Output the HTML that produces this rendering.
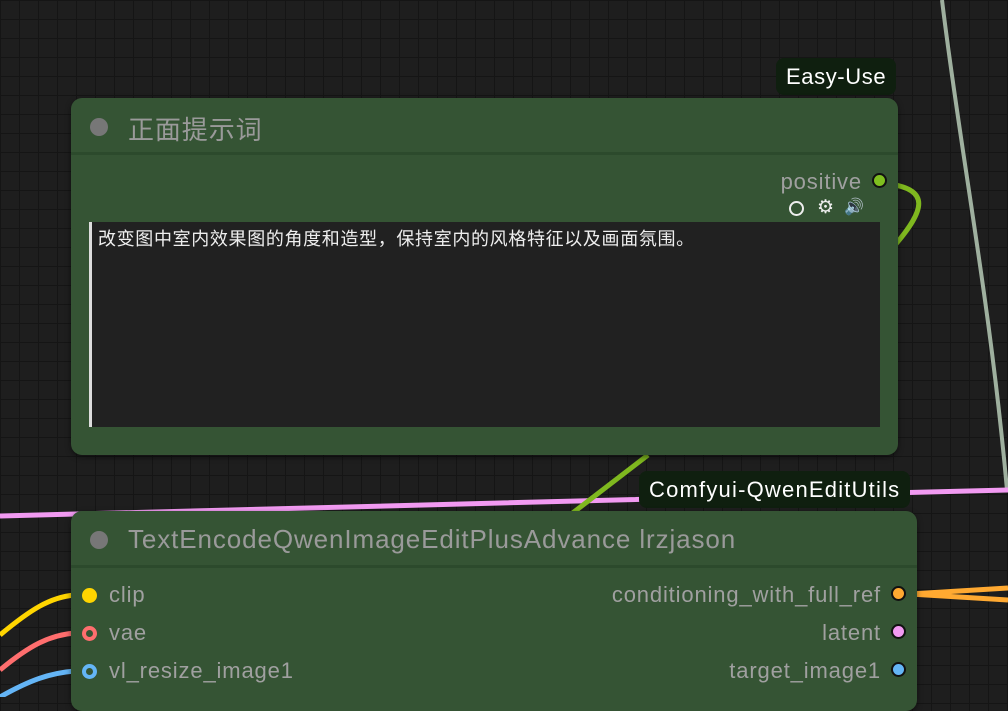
<!DOCTYPE html><html><head><meta charset="utf-8"><style>
body{margin:0;width:1008px;height:697px;overflow:hidden;position:relative;background-color:#1e1e1e;
background-image:linear-gradient(#151515 1px,transparent 1px),linear-gradient(90deg,#151515 1px,transparent 1px);background-size:19px 19px;font-family:"Liberation Sans","Noto Sans CJK SC",sans-serif}
.node{position:absolute;background:#355434;border-radius:11px;box-shadow:0 2px 6px rgba(0,0,0,.5)}
.hdr{position:absolute;left:0;right:0;top:0;border-bottom:3px solid #2c4a2c}
.t{position:absolute;color:#9a9a9a;font-size:26px;letter-spacing:0.9px;white-space:nowrap}
.dot{position:absolute;width:18px;height:18px;border-radius:50%;background:#777}
.badge{position:absolute;background:#0f1f0f;color:#fff;font-size:22px;letter-spacing:1.2px;border-radius:8px;padding:0 10px;height:37px;line-height:37px;white-space:nowrap}
.lbl{position:absolute;color:#a0a0a0;font-size:22px;letter-spacing:0.85px;white-space:nowrap}
.s{position:absolute;width:11px;height:11px;border-radius:50%;border:2px solid #111}
</style></head><body>
<svg width="1008" height="697" style="position:absolute;left:0;top:0">
<path d="M942 0 C960 150 990 300 1007 490" stroke="#9fb09f" stroke-width="4" fill="none"/>
<path d="M0 516 L500 503 L1008 490" stroke="#f29af2" stroke-width="5" fill="none"/>
<path d="M890 184 C930 190 925 210 895 245" stroke="#7fb81f" stroke-width="5" fill="none"/>
<path d="M648 455 L570 515" stroke="#7fb81f" stroke-width="5" fill="none"/>
<path d="M0 635 C30 610 50 597 75 595" stroke="#ffd500" stroke-width="5" fill="none"/>
<path d="M0 670 C30 645 50 635 75 633" stroke="#ff6e6e" stroke-width="5" fill="none"/>
<path d="M0 697 C30 680 50 673 75 671" stroke="#64b5f6" stroke-width="5" fill="none"/>
<path d="M910 594 L1008 588 M910 594 L1008 600" stroke="#ffa931" stroke-width="5" fill="none"/>
</svg>
<div class="badge" style="left:776px;top:58px;letter-spacing:0.6px">Easy-Use</div>
<div class="node" style="left:71px;top:98px;width:827px;height:357px">
 <div class="hdr" style="height:54px"></div>
 <div class="dot" style="left:19px;top:20px"></div>
 <div class="t" style="left:57px;top:12px">正面提示词</div>
 <div class="lbl" style="right:36px;top:71px">positive</div>
 <div class="s" style="left:801px;top:75px;background:#7fbf1f"></div>
 <div style="position:absolute;left:718px;top:103px;width:11px;height:11px;border:2px solid #eee;border-radius:50%"></div>
 <div style="position:absolute;left:746px;top:98px;color:#eee;font-size:19px">⚙</div>
 <div style="position:absolute;left:773px;top:99px;color:#ccc;font-size:16px">🔊</div>
 <div style="position:absolute;left:18px;top:124px;width:791px;height:205px;background:#212121;border-left:3px solid #ddd;color:#eee;font-size:18px;letter-spacing:0.65px;padding:3px 0 0 6px;box-sizing:border-box">改变图中室内效果图的角度和造型，保持室内的风格特征以及画面氛围。</div>
</div>
<div class="badge" style="left:639px;top:471px">Comfyui-QwenEditUtils</div>
<div class="node" style="left:71px;top:511px;width:846px;height:200px">
 <div class="hdr" style="height:54px"></div>
 <div class="dot" style="left:19px;top:20px"></div>
 <div class="t" style="left:57px;top:13px">TextEncodeQwenImageEditPlusAdvance lrzjason</div>
 <div class="s" style="left:11px;top:77px;background:#ffd500;border-color:#ffd500"></div>
 <div class="lbl" style="left:38px;top:71px">clip</div>
 <div class="s" style="left:11px;top:115px;background:#355434;border:4px solid #ff6e6e;width:7px;height:7px"></div>
 <div class="lbl" style="left:38px;top:109px">vae</div>
 <div class="s" style="left:11px;top:153px;background:#355434;border:4px solid #64b5f6;width:7px;height:7px"></div>
 <div class="lbl" style="left:38px;top:147px">vl_resize_image1</div>
 <div class="lbl" style="right:36px;top:71px">conditioning_with_full_ref</div>
 <div class="s" style="left:820px;top:75px;background:#ffa931"></div>
 <div class="lbl" style="right:36px;top:109px">latent</div>
 <div class="s" style="left:820px;top:113px;background:#f29af2"></div>
 <div class="lbl" style="right:36px;top:147px">target_image1</div>
 <div class="s" style="left:820px;top:151px;background:#64b5f6"></div>
</div>
</body></html>
